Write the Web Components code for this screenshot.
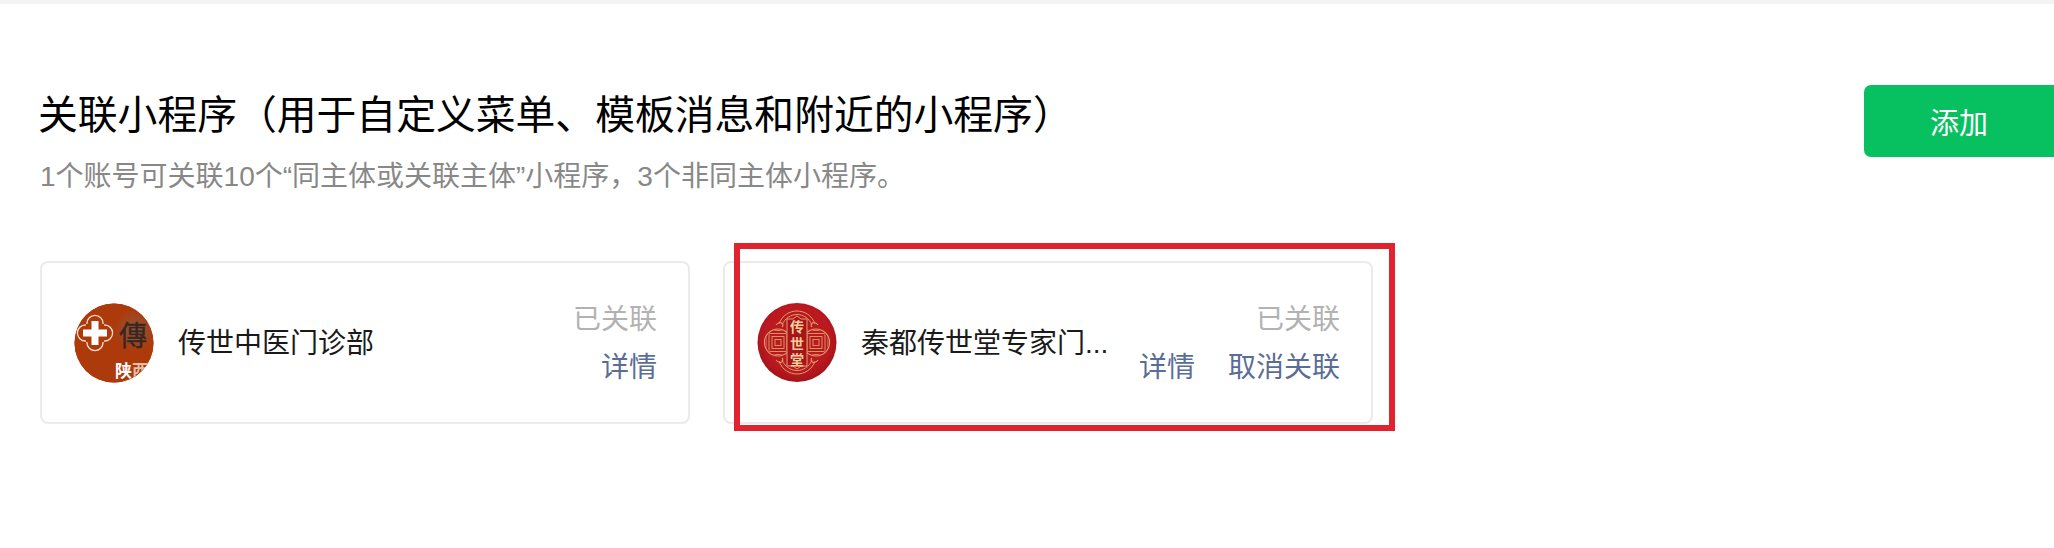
<!DOCTYPE html>
<html lang="zh-CN">
<head>
<meta charset="utf-8">
<title>关联小程序</title>
<style>
  html, body { margin: 0; background: #fff; }
  body { font-family: "Liberation Sans", "Noto Sans CJK SC", sans-serif; overflow: hidden; }
</style>
</head>
<body>
<bind-section>
  <span slot="title">关联小程序（用于自定义菜单、模板消息和附近的小程序）</span>
  <span slot="desc">1个账号可关联10个“同主体或关联主体”小程序，3个非同主体小程序。</span>
  <green-button slot="action">添加</green-button>

  <bind-card name="传世中医门诊部">
    <clinic-logo slot="logo"></clinic-logo>
    <a-link>详情</a-link>
  </bind-card>

  <bind-card name="秦都传世堂专家门..." marked>
    <seal-logo slot="logo"></seal-logo>
    <a-link>详情</a-link>
    <a-link>取消关联</a-link>
  </bind-card>
</bind-section>

<script>
// Section : bandeau gris, en-tete (titre + bouton), puis la rangee de cartes
class BindSection extends HTMLElement {
  constructor() {
    super();
    this.attachShadow({ mode: 'open' }).innerHTML = `
      <style>
        :host { display: block; height: 548px; box-sizing: border-box; border-top: 4px solid #f3f4f5; padding: 81px 0 0 40px; }
        header { display: flex; justify-content: space-between; align-items: flex-start; }
        h2 { margin: 1px 0 0 -2px; font-size: 39.8px; line-height: 58px; font-weight: 400; color: #000; white-space: nowrap; }
        p { margin: 13px 0 0; font-size: 28px; line-height: 40px; color: #888; white-space: nowrap; }
        .cards { display: flex; gap: 33px; margin-top: 64px; }
      </style>
      <header>
        <div>
          <h2><slot name="title"></slot></h2>
          <p><slot name="desc"></slot></p>
        </div>
        <slot name="action"></slot>
      </header>
      <div class="cards"><slot></slot></div>`;
  }
}

class GreenButton extends HTMLElement {
  constructor() {
    super();
    this.attachShadow({ mode: 'open' }).innerHTML = `
      <style>
        :host { display: flex; align-items: center; justify-content: center; width: 190px; height: 72px;
                background: #07c160; color: #fff; font-size: 29px; border-radius: 7px 0 0 7px; }
      </style>
      <slot></slot>`;
  }
}

class ALink extends HTMLElement {
  constructor() {
    super();
    this.attachShadow({ mode: 'open' }).innerHTML = `
      <style>:host { display: inline-block; color: #5a6d96; font-size: 28px; line-height: 40px; }</style>
      <slot></slot>`;
  }
}

// Carte d'un mini-programme. L'attribut "marked" ajoute le cadre rouge d'annotation.
class BindCard extends HTMLElement {
  constructor() {
    super();
    const name = this.getAttribute('name') || '';
    this.attachShadow({ mode: 'open' }).innerHTML = `
      <style>
        :host { display: flex; position: relative; align-items: center; width: 650px; height: 163px; box-sizing: border-box;
                border: 2px solid #ebebeb; border-radius: 8px; padding: 0 31px 0 32px; }
        .name { margin-left: 24px; padding-top: 2px; flex: 1; font-size: 28px; line-height: 40px; color: #1a1a1a; white-space: nowrap; }
        .side { display: flex; flex-direction: column; align-items: flex-end; gap: 8px; padding-top: 3px; }
        .status { font-size: 28px; line-height: 40px; color: #b2b2b2; }
        .ops { display: flex; gap: 33px; }
        .mark { display: none; position: absolute; left: 9px; top: -20px; width: 661px; height: 188px;
                box-sizing: border-box; border: 6px solid #e1222f; }
        :host([marked]) .mark { display: block; }
      </style>
      <slot name="logo"></slot>
      <div class="name">${name}</div>
      <div class="side">
        <div class="status">已关联</div>
        <div class="ops"><slot></slot></div>
      </div>
      <div class="mark"></div>`;
  }
}

// Logo rond brun : croix blanche dans une fleur, caractere calligraphie
class ClinicLogo extends HTMLElement {
  constructor() {
    super();
    this.attachShadow({ mode: 'open' }).innerHTML = `
      <style>:host { display: block; width: 80px; height: 80px; flex: none; } svg { display: block; }</style>
      <svg width="80" height="80" viewBox="0 0 80 80">
        <defs>
          <clipPath id="c"><circle cx="40" cy="40" r="39.500"/></clipPath>
          <radialGradient id="g" cx="76%" cy="34%" r="26%">
            <stop offset="0" stop-color="#8a5a44"/><stop offset="1" stop-color="#ad3a0b"/>
          </radialGradient>
        </defs>
        <g clip-path="url(#c)">
          <rect width="80" height="80" fill="#ad3a0b"/>
          <rect width="80" height="80" fill="url(#g)"/>
          <!-- fleur : quatre lobes a contour blanc, l'interieur recouvre les traits -->
          <g fill="none" stroke="#f6dccb" stroke-width="1.500">
            <circle cx="21" cy="20.500" r="8"/><circle cx="21" cy="39.500" r="8"/>
            <circle cx="11.500" cy="30" r="8"/><circle cx="30.500" cy="30" r="8"/>
          </g>
          <g fill="#ad3a0b">
            <circle cx="21" cy="20.500" r="7.200"/><circle cx="21" cy="39.500" r="7.200"/>
            <circle cx="11.500" cy="30" r="7.200"/><circle cx="30.500" cy="30" r="7.200"/>
            <rect x="12" y="21" width="18" height="18"/>
          </g>
          <path d="M17.500 18h7v8.500h8.500v7h-8.500v8.500h-7v-8.500h-8.500v-7h8.500z" fill="#fff"/>
          <text x="45" y="43" font-size="28" fill="#3a2620" stroke="#3a2620" stroke-width=".4" font-family="Noto Sans CJK TC, sans-serif">傳</text>
          <text x="41" y="74" font-size="17" font-weight="700" fill="#fff" font-family="Noto Sans CJK SC, sans-serif">陕<tspan fill="#e3bda8">西</tspan></text>
        </g>
      </svg>`;
  }
}

// Logo rond rouge : motif dore en treillis, panneau central vertical
class SealLogo extends HTMLElement {
  constructor() {
    super();
    // un carre de treillis concentrique, repete de chaque cote
    const lattice = (cx) => [12, 9, 6, 3].map(s =>
      `<rect x="${cx - s}" y="${39.5 - s}" width="${s * 2}" height="${s * 2}"/>`).join('');
    const gold = '#d8a06c';
    this.attachShadow({ mode: 'open' }).innerHTML = `
      <style>:host { display: block; width: 80px; height: 80px; flex: none; } svg { display: block; }</style>
      <svg width="80" height="80" viewBox="0 0 80 80">
        <defs>
          <radialGradient id="r" cx="50%" cy="45%" r="55%">
            <stop offset=".75" stop-color="#bb191f"/><stop offset="1" stop-color="#a3141a"/>
          </radialGradient>
          <clipPath id="l"><circle cx="21" cy="39.500" r="12.500"/><circle cx="59" cy="39.500" r="12.500"/></clipPath>
        </defs>
        <circle cx="40" cy="39.500" r="39.500" fill="url(#r)"/>
        <!-- arcs concentriques en haut et en bas -->
        <g fill="none" stroke="${gold}" stroke-width="1">
          <path d="M22 21C25 12 33 8 40 8s15 4 18 13"/>
          <path d="M25 22C28 15 34 11.500 40 11.500s12 3.500 15 10.500"/>
          <path d="M22 58C25 67 33 71 40 71s15-4 18-13"/>
          <path d="M25 57C28 64 34 67.500 40 67.500s12-3.500 15-10.500"/>
        </g>
        <!-- lobes lateraux -->
        <g fill="none" stroke="${gold}" stroke-width="1.100">
          <circle cx="21" cy="39.500" r="13.500"/><circle cx="59" cy="39.500" r="13.500"/>
          <path d="M19 22c4-5 9-1 6 2M61 22c-4-5-9-1-6 2M19 57c4 5 9 1 6-2M61 57c-4 5-9 1-6-2"/>
        </g>
        <g fill="none" stroke="${gold}" stroke-width=".9" clip-path="url(#l)">${lattice(21)}${lattice(59)}</g>
        <!-- panneau central -->
        <path d="M40 13l4 3h6v47h-6l-4 3-4-3h-6V16h6z" fill="#a8141a" stroke="${gold}" stroke-width="1"/>
        <text x="40" y="17" font-size="14" font-weight="700" fill="#f4cf9a" text-anchor="start"
              style="writing-mode:vertical-rl;letter-spacing:2.500px" font-family="Noto Sans CJK SC, sans-serif">传世堂</text>
      </svg>`;
  }
}

customElements.define('bind-section', BindSection);
customElements.define('green-button', GreenButton);
customElements.define('a-link', ALink);
customElements.define('bind-card', BindCard);
customElements.define('clinic-logo', ClinicLogo);
customElements.define('seal-logo', SealLogo);
</script>
</body>
</html>
